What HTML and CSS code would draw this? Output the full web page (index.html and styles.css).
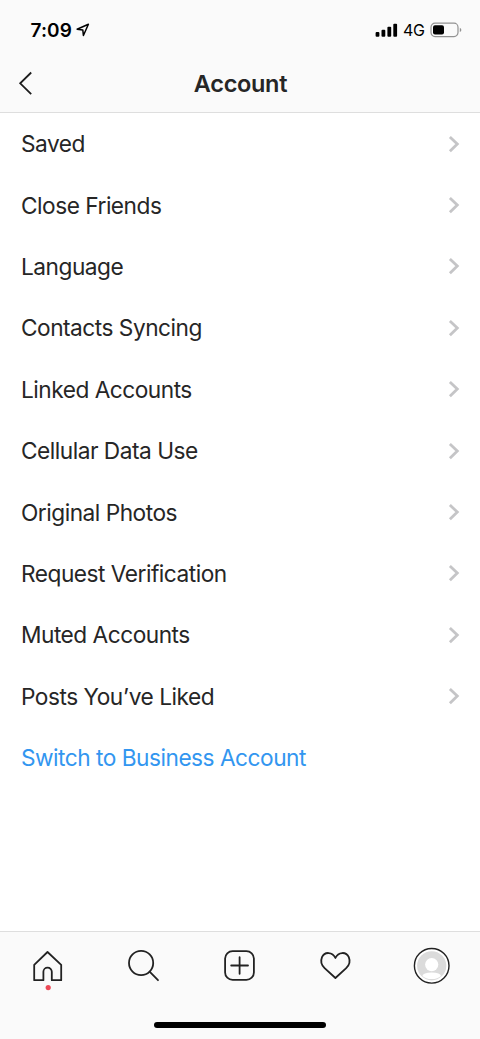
FILE: index.html
```html
<!DOCTYPE html>
<html lang="en">
<head>
<meta charset="utf-8">
<title>Account</title>
<link rel="stylesheet" href="styles.css">
</head>
<body>
<div class="screen">
  <header class="top">
    <div class="status">
      <span class="time">7:09</span>
      <svg class="location" width="14" height="14" viewBox="0 0 14 14"><path d="M1.1 6.2 12.4 1.3 7.4 12.5 6.8 6.9Z"/></svg>
      <svg class="signal" width="24" height="14" viewBox="0 0 24 14"><rect x="0.6" y="9" width="3.8" height="4.8" rx="1"/><rect x="6.5" y="6.8" width="3.8" height="7" rx="1"/><rect x="12.4" y="3.8" width="3.8" height="10" rx="1"/><rect x="18.3" y="0.8" width="3.8" height="13" rx="1"/></svg>
      <span class="network">4G</span>
      <svg class="battery" width="32" height="16" viewBox="0 0 32 16"><rect class="shell" x="1" y="1.2" width="27" height="13.4" rx="4"/><rect x="3" y="3.2" width="11" height="9.4" rx="2"/><path class="cap" d="M29.8 5.7Q31.4 6.4 31.4 7.9T29.8 10.1Z"/></svg>
    </div>
    <div class="nav">
      <svg class="back" width="14" height="24" viewBox="0 0 14 24"><path d="M12.2 0.5 1.2 11.3 12.2 22.1"/></svg>
      <h1 class="title">Account</h1>
    </div>
  </header>
  <ul class="list">
    <li class="row"><span>Saved</span><svg class="chevron" width="12" height="18" viewBox="0 0 12 18"><path d="M1.9 2 9.3 9.1 1.9 16.2"/></svg></li>
    <li class="row"><span>Close Friends</span><svg class="chevron" width="12" height="18" viewBox="0 0 12 18"><path d="M1.9 2 9.3 9.1 1.9 16.2"/></svg></li>
    <li class="row"><span>Language</span><svg class="chevron" width="12" height="18" viewBox="0 0 12 18"><path d="M1.9 2 9.3 9.1 1.9 16.2"/></svg></li>
    <li class="row"><span>Contacts Syncing</span><svg class="chevron" width="12" height="18" viewBox="0 0 12 18"><path d="M1.9 2 9.3 9.1 1.9 16.2"/></svg></li>
    <li class="row"><span>Linked Accounts</span><svg class="chevron" width="12" height="18" viewBox="0 0 12 18"><path d="M1.9 2 9.3 9.1 1.9 16.2"/></svg></li>
    <li class="row"><span>Cellular Data Use</span><svg class="chevron" width="12" height="18" viewBox="0 0 12 18"><path d="M1.9 2 9.3 9.1 1.9 16.2"/></svg></li>
    <li class="row"><span>Original Photos</span><svg class="chevron" width="12" height="18" viewBox="0 0 12 18"><path d="M1.9 2 9.3 9.1 1.9 16.2"/></svg></li>
    <li class="row"><span>Request Verification</span><svg class="chevron" width="12" height="18" viewBox="0 0 12 18"><path d="M1.9 2 9.3 9.1 1.9 16.2"/></svg></li>
    <li class="row"><span>Muted Accounts</span><svg class="chevron" width="12" height="18" viewBox="0 0 12 18"><path d="M1.9 2 9.3 9.1 1.9 16.2"/></svg></li>
    <li class="row"><span>Posts You’ve Liked</span><svg class="chevron" width="12" height="18" viewBox="0 0 12 18"><path d="M1.9 2 9.3 9.1 1.9 16.2"/></svg></li>
    <li class="row action"><span>Switch to Business Account</span></li>
  </ul>
  <footer class="bottom">
    <div class="tabs">
      <div class="tab"><svg width="40" height="46" viewBox="0 0 40 46"><path class="line" d="M6.2 15.8 19.5 3 33.2 15.8V31.2H23.8V22.8A4.2 4.2 0 0 0 15.4 22.8V31.2H6.2Z"/><circle class="dot" cx="20.2" cy="38.6" r="2.6"/></svg></div>
      <div class="tab"><svg width="40" height="46" viewBox="0 0 40 46"><circle class="line" cx="17.1" cy="14" r="12.1"/><path class="line" d="M25.6 22.6 34 31.2"/></svg></div>
      <div class="tab"><svg width="40" height="46" viewBox="0 0 40 46"><rect class="line" x="5.1" y="2.1" width="28.8" height="28.8" rx="7.5"/><path class="line" d="M19.6 8.2V24.8M11.2 16.5H28"/></svg></div>
      <div class="tab"><svg width="40" height="46" viewBox="0 0 40 46"><path class="line" d="M19.4 9C16.5 2.6 8.5 2.4 6 8.2C4.5 12 5.2 16 8.6 19.1L19.4 29L30.2 19.1C33.6 16 34.3 12 32.8 8.2C30.3 2.4 22.3 2.6 19.4 9Z"/></svg></div>
      <div class="tab"><svg width="40" height="46" viewBox="0 0 40 46"><circle class="ring" cx="19.7" cy="16.8" r="17.3"/><circle class="face" cx="19.7" cy="16.8" r="14.6"/><circle class="person" cx="19.7" cy="15.6" r="6.6"/><path class="person" d="M10.4 27Q11 23.4 19.7 23.4T29 27Q25.8 30.1 19.7 30.1T10.4 27Z"/></svg></div>
    </div>
    <div class="home-bar"></div>
  </footer>
</div>
</body>
</html>
```
FILE: styles.css
```css
* { box-sizing: border-box; }
body {
  margin: 0;
  background: #fff;
  color: #262626;
  font-family: Inter, "Liberation Sans", sans-serif;
}
.screen { display: flex; flex-direction: column; width: 480px; height: 1039px; overflow: hidden; }
svg { display: block; flex: none; overflow: visible; }
.top { height: 113px; flex: none; background: #fafafa; border-bottom: 1px solid #dedede; }
.status { display: flex; align-items: center; height: 60px; padding: 0 18px 0 30.5px; color: #000; }
.time { width: 45.5px; font-size: 19px; font-weight: 600; letter-spacing: 0.1px; white-space: nowrap; }
.location { fill: none; stroke: #000; stroke-width: 1.5; stroke-linejoin: round; }
.signal { margin-left: auto; }
.network { width: 24px; margin: 0 3px 0 4px; font-size: 16px; font-weight: 400; letter-spacing: -0.4px; white-space: nowrap; }
.shell { fill: none; stroke: #929292; stroke-width: 1.2; }
.cap { fill: #929292; }
.nav { display: grid; grid-template-columns: 1fr auto 1fr; align-items: center; height: 48px; padding: 0 18px 0 19px; }
.back { fill: none; stroke: #1c1c1c; stroke-width: 1.8; }
.title { margin: 0; font-size: 23.5px; font-weight: 600; line-height: 30px; letter-spacing: -0.3px; }
.list { flex: 1; margin: 0; padding: 0; list-style: none; }
.row { display: flex; align-items: center; justify-content: space-between; height: 61.4px; padding: 0 20px 0 21px; font-size: 22.7px; line-height: 27px; letter-spacing: -0.5px; white-space: nowrap; }
.chevron { fill: none; stroke: #c5c5c7; stroke-width: 2.8; }
.action { color: #3296f0; }
.bottom { display: flex; flex-direction: column; align-items: center; height: 108px; flex: none; background: #fafafa; border-top: 1px solid #dedede; }
.tabs { display: flex; width: 100%; height: 90px; padding-top: 17px; }
.tab { display: flex; flex: 1; justify-content: center; }
.line { fill: none; stroke: #222; stroke-width: 1.8; stroke-linejoin: round; stroke-linecap: round; }
.dot { fill: #ed4956; }
.ring { fill: #fff; stroke: #222; stroke-width: 1.4; }
.face { fill: #dbdbdb; }
.person { fill: #fff; }
.home-bar { width: 172px; height: 6px; border-radius: 3px; background: #000; }
```
